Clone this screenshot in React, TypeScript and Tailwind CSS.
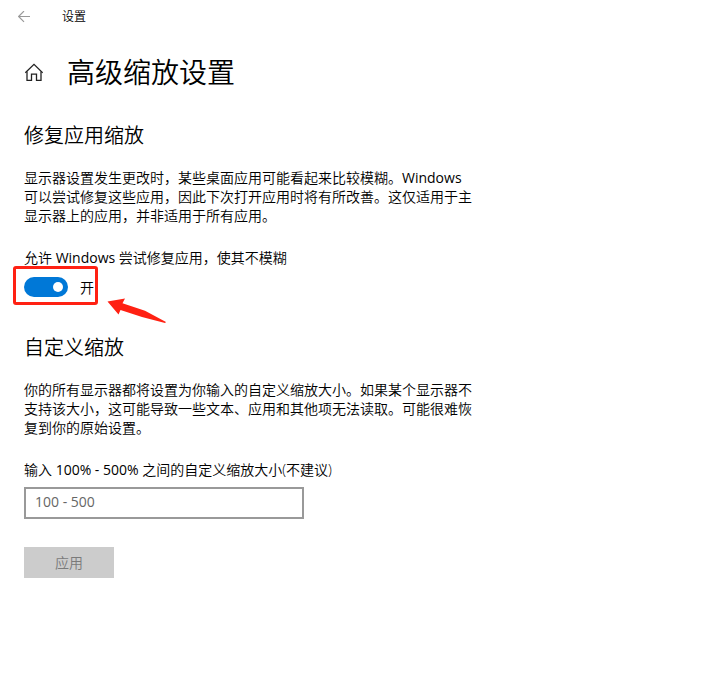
import { useState } from "react"

function App() {
  const [fixApps, setFixApps] = useState(true)
  const [scale, setScale] = useState("")

  return (
    <div className="min-h-screen bg-white text-black text-sm leading-[19px] font-[350] font-['Open_Sans','Noto_Sans_CJK_SC',sans-serif]">

      {/* Title bar */}
      <header className="flex h-[34px] items-center gap-8 pl-[18px] text-xs">

        <button type="button" aria-label="返回" className="text-[#999999]">
          <svg width="12" height="12" viewBox="0 0 12 12" fill="none" stroke="currentColor" strokeWidth="1.2">
            <path d="M12 5.5H0.7M6 0.1L0.6 5.5L6 10.9" />
          </svg>
        </button>

        <span>设置</span>

      </header>

      <main className="px-6">

        {/* Page heading */}
        <div className="flex items-center gap-6 pt-[18px]">

          <a href="#home" aria-label="主页">
            <svg width="19" height="18" viewBox="0 0 19 18" fill="none" stroke="#222222" strokeWidth="1.3">
              <path d="M1.3 9.8L10 1.4L18.7 9.8" />
              <path d="M3 8.4V17.3H7.5V11.2H12.5V17.3H17V8.4" />
            </svg>
          </a>

          <h1 className="text-[28px] leading-10">高级缩放设置</h1>

        </div>

        {/* Fix scaling for apps */}
        <section className="pt-[30px]">

          <h2 className="text-xl leading-7">修复应用缩放</h2>

          <p className="mt-[18px] max-w-[450px]">
            显示器设置发生更改时，某些桌面应用可能看起来比较模糊。<span className="font-normal">Windows</span> 可以尝试修复这些应用，因此下次打开应用时将有所改善。这仅适用于主显示器上的应用，并非适用于所有应用。
          </p>

          <label htmlFor="fix-apps" className="mt-[23px] block">
            允许 <span className="font-normal">Windows</span> 尝试修复应用，使其不模糊
          </label>

          <div className="relative mt-[10px] flex h-5 items-center gap-3">

            <input
              id="fix-apps"
              type="checkbox"
              role="switch"
              checked={fixApps}
              onChange={(e) => setFixApps(e.target.checked)}
              className="h-5 w-11 appearance-none rounded-full bg-[#999999] p-[5px] before:block before:size-[10px] before:rounded-full before:bg-white checked:bg-[#0078d7] checked:before:ml-6"
            />

            <span>{fixApps ? "开" : "关"}</span>

            {/* Highlight around the switch */}
            <div className="pointer-events-none absolute -top-[11px] -left-[11px] h-[39px] w-[85px] rounded-[3px] border-3 border-[#ff2113]" />

            <svg className="pointer-events-none absolute top-5 left-[83px]" width="60" height="27" viewBox="0 0 60 27">
              <path d="M0.5 4.5L18 1.5L15.5 6.3L38 13.8L59 25L58 26L35 20L13.5 13L11.5 17.5Z" fill="#ff2113" />
            </svg>

          </div>
        </section>

        {/* Custom scaling */}
        <section className="pt-[37px]">

          <h2 className="text-xl leading-7">自定义缩放</h2>

          <p className="mt-[18px] max-w-[450px]">
            你的所有显示器都将设置为你输入的自定义缩放大小。如果某个显示器不支持该大小，这可能导致一些文本、应用和其他项无法读取。可能很难恢复到你的原始设置。
          </p>

          <label htmlFor="custom-scale" className="mt-[23px] block">
            输入 <span className="font-normal">100% - 500%</span> 之间的自定义缩放大小(不建议)
          </label>

          <input
            id="custom-scale"
            type="text"
            placeholder="100 - 500"
            value={scale}
            onChange={(e) => setScale(e.target.value)}
            className="mt-2 block h-8 w-full max-w-[280px] border-2 border-[#999999] px-[9px] pb-1 font-normal outline-none placeholder:text-[#666666]"
          />

          <button
            type="button"
            disabled={scale === ""}
            className="mt-7 block h-[31px] w-[90px] bg-[#cccccc] disabled:text-[#7a7a7a]"
          >
            应用
          </button>

        </section>
      </main>
    </div>
  )
}

export default App
